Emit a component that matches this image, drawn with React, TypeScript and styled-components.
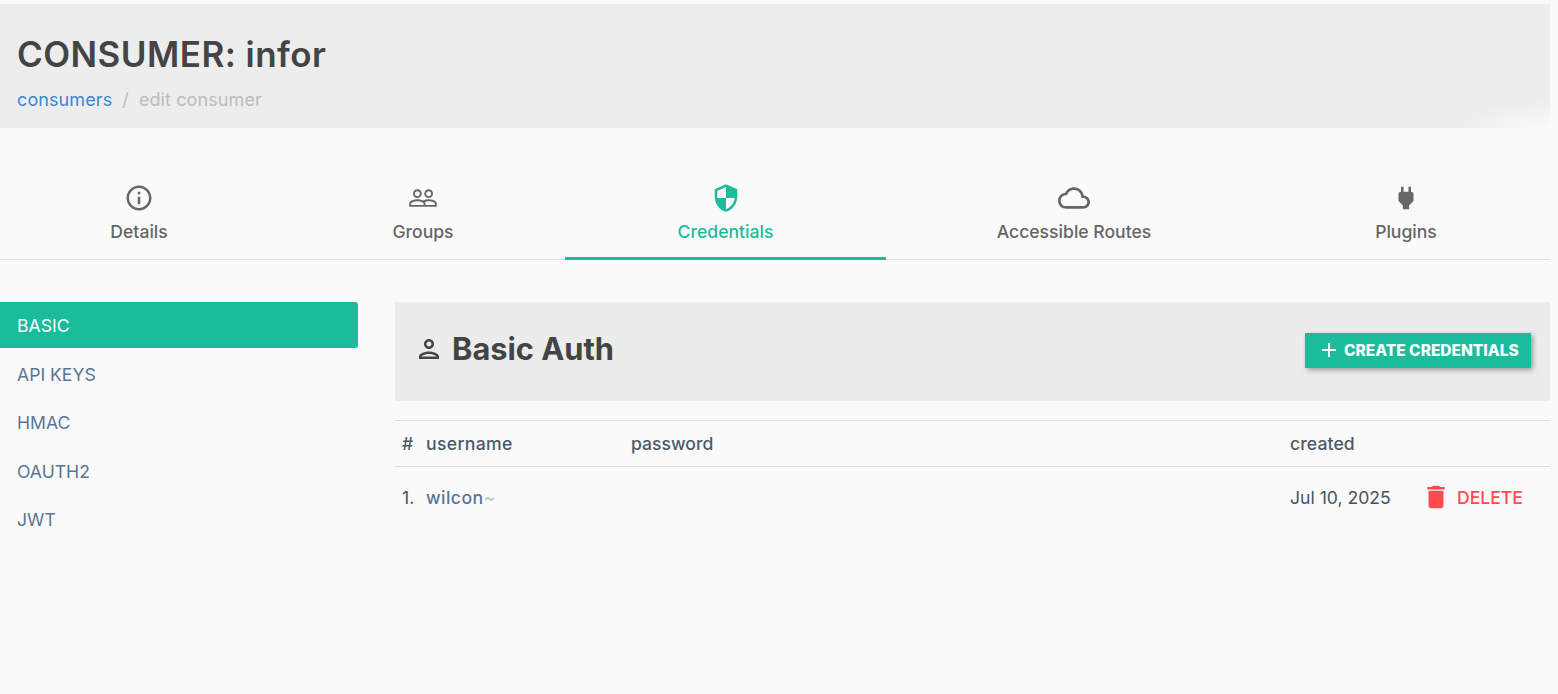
import { createGlobalStyle, styled } from "styled-components";
import {
  MdAdd,
  MdCloudQueue,
  MdDelete,
  MdInfoOutline,
  MdOutlinePerson,
  MdPeopleOutline,
  MdPower,
  MdSecurity,
} from "react-icons/md";

const GlobalStyle = createGlobalStyle`
  html, body {
    margin: 0;
    padding: 0;
    background: #fafafa;
    font-family: "Inter", "Liberation Sans", sans-serif;
  }
`;

const Page = styled.div`
  width: 1550px;
  height: 694px;
  padding-top: 4px;
  box-sizing: border-box;
  overflow: hidden;
`;

const PageHeader = styled.header`
  height: 124px;
  box-sizing: border-box;
  padding: 30px 17px 0;
  background: radial-gradient(ellipse 90px 28px at 100% 100%, #fafafa, rgba(250, 250, 250, 0)), #ededed;
`;

const Title = styled.h1`
  margin: 0;
  font-size: 35px;
  line-height: 40px;
  font-weight: 600;
  letter-spacing: 0.45px;
  color: #444;
`;

const Breadcrumb = styled.div`
  display: flex;
  margin-top: 14px;
  font-size: 18px;
  line-height: 24px;
  letter-spacing: 0.1px;
  color: #bbb;

  a {
    color: #3a87d6;
    text-decoration: none;
  }

  span.sep {
    margin: 0 10px;
  }
`;

const Tabs = styled.nav`
  display: grid;
  grid-template-columns: 278px 287px 321px 376px 288px;
  margin-top: 52px;
  border-bottom: 1px solid #ddd;
`;

const Tab = styled.div<{ $active?: boolean }>`
  height: 80px;
  box-sizing: border-box;
  display: flex;
  flex-direction: column;
  align-items: center;
  color: ${(p) => (p.$active ? "#1abc9c" : "#666")};
  border-bottom: 3px solid ${(p) => (p.$active ? "#1abc9c" : "transparent")};
  margin-bottom: -1px;
  font-size: 17.6px;
  font-weight: 500;

  &:nth-child(2) {
    padding-left: 3px;
  }

  .icon {
    height: 36px;
    display: flex;
    align-items: center;
    justify-content: center;
  }

  .label {
    margin-top: 5px;
    line-height: 22px;
  }
`;

const Body = styled.div`
  display: grid;
  grid-template-columns: 358px 1fr;
  column-gap: 37px;
  padding-top: 42px;
`;

const SideMenu = styled.ul`
  list-style: none;
  margin: 0;
  padding: 0;
  display: flex;
  flex-direction: column;
  gap: 2.5px;
`;

const SideItem = styled.li<{ $active?: boolean }>`
  height: 46px;
  box-sizing: border-box;
  display: flex;
  align-items: center;
  padding: 1px 0 0 17px;
  font-size: 17.6px;
  border-radius: 0 3px 3px 0;
  color: ${(p) => (p.$active ? "#fff" : "#5a7595")};
  background: ${(p) => (p.$active ? "#1abc9c" : "transparent")};
`;

const PanelHead = styled.div`
  height: 99px;
  box-sizing: border-box;
  display: flex;
  align-items: center;
  justify-content: space-between;
  padding: 0 19px 3px;
  background: #ececec;
`;

const PanelTitle = styled.h2`
  display: flex;
  align-items: center;
  gap: 8px;
  margin: 0 0 3px;
  font-size: 30.8px;
  font-weight: 700;
  color: #444;
`;

const CreateButton = styled.button`
  display: flex;
  align-items: center;
  gap: 3px;
  width: 226px;
  height: 35px;
  padding: 0 0 0 12px;
  border: none;
  background: #1abc9c;
  color: #fff;
  font-family: inherit;
  font-size: 15.5px;
  font-weight: 800;
  box-shadow: 2px 2px 5px rgba(0, 0, 0, 0.35);
`;

const CredTable = styled.table`
  width: 100%;
  margin-top: 19px;
  border-collapse: collapse;
  table-layout: fixed;
  font-size: 17.6px;
  color: #44525e;

  th {
    height: 45px;
    padding: 0;
    text-align: left;
    font-weight: 500;
    color: #4a5a68;
    border-top: 1px solid #ddd;
    border-bottom: 1px solid #ddd;
  }

  td {
    height: 60px;
    padding: 0;
  }

  .num {
    width: 31px;
    padding-left: 7px;
    box-sizing: border-box;
  }
  .user {
    width: 205px;
    letter-spacing: 0.35px;
  }
  .created {
    width: 135px;
    letter-spacing: 0.1px;
  }
  .action {
    width: 125px;
  }
`;

const UserLink = styled.a`
  color: #5a7595;
  font-weight: 500;
  letter-spacing: 0.45px;
  text-decoration: none;

  i {
    font-style: normal;
    opacity: 0.4;
  }
`;

const DeleteLink = styled.a`
  display: flex;
  align-items: center;
  gap: 6px;
  margin-left: -4px;
  color: #ff4a50;
  font-size: 17.6px;
  font-weight: 500;
`;

const App = () => (
  <Page>
    <GlobalStyle />
    <PageHeader>
      <Title>CONSUMER: infor</Title>
      <Breadcrumb>
        <a href="#">consumers</a>
        <span className="sep">/</span>
        <span>edit consumer</span>
      </Breadcrumb>
    </PageHeader>

    <Tabs>
      <Tab>
        <span className="icon"><MdInfoOutline size={30} /></span>
        <span className="label">Details</span>
      </Tab>
      <Tab>
        <span className="icon"><MdPeopleOutline size={30} /></span>
        <span className="label">Groups</span>
      </Tab>
      <Tab $active>
        <span className="icon"><MdSecurity size={30} /></span>
        <span className="label">Credentials</span>
      </Tab>
      <Tab>
        <span className="icon"><MdCloudQueue size={32} /></span>
        <span className="label">Accessible Routes</span>
      </Tab>
      <Tab>
        <span className="icon"><MdPower size={30} /></span>
        <span className="label">Plugins</span>
      </Tab>
    </Tabs>

    <Body>
      <SideMenu>
        <SideItem $active>BASIC</SideItem>
        <SideItem>API KEYS</SideItem>
        <SideItem>HMAC</SideItem>
        <SideItem>OAUTH2</SideItem>
        <SideItem>JWT</SideItem>
      </SideMenu>

      <section>
        <PanelHead>
          <PanelTitle>
            <MdOutlinePerson size={30} />
            Basic Auth
          </PanelTitle>
          <CreateButton>
            <MdAdd size={24} />
            CREATE CREDENTIALS
          </CreateButton>
        </PanelHead>

        <CredTable>
          <thead>
            <tr>
              <th className="num">#</th>
              <th className="user">username</th>
              <th>password</th>
              <th className="created">created</th>
              <th className="action"></th>
            </tr>
          </thead>
          <tbody>
            <tr>
              <td className="num">1.</td>
              <td><UserLink href="#">wilcon<i>~</i></UserLink></td>
              <td></td>
              <td>Jul 10, 2025</td>
              <td>
                <DeleteLink>
                  <MdDelete size={30} />
                  DELETE
                </DeleteLink>
              </td>
            </tr>
          </tbody>
        </CredTable>
      </section>
    </Body>
  </Page>
);

export default App;
